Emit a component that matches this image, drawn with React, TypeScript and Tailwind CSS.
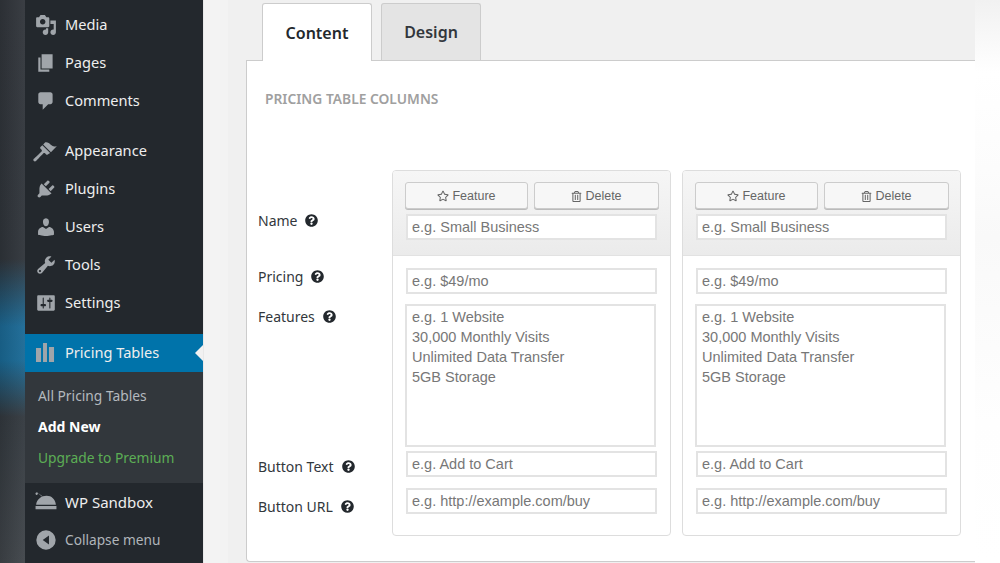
import React from "react";
import { FaQuestionCircle, FaRegStar, FaRegTrashAlt } from "react-icons/fa";

const P = ({ d }: { d: string }) => (
  <svg viewBox="0 0 20 20" className="w-[22px] h-[22px] fill-[#a0a5aa] overflow-visible" fillRule="evenodd">
    <path d={d} />
  </svg>
);

const icons: Record<string, React.ReactNode> = {
  media: <P d="M13 11V4c0-.55-.45-1-1-1h-1.67L9 1H5L3.67 3H2c-.55 0-1 .45-1 1v7c0 .55.45 1 1 1h10c.55 0 1-.45 1-1zM7 4.500c1.380 0 2.500 1.120 2.500 2.500S8.380 9.500 7 9.500 4.500 8.380 4.500 7 5.620 4.500 7 4.500zM14 6h5v10.500c0 1.380-1.120 2.500-2.500 2.500S14 17.880 14 16.500s1.120-2.500 2.500-2.500c.17 0 .34.02.5.05V9h-3V6zm-4 8.050V13h2v3.500c0 1.380-1.120 2.500-2.500 2.500S7 17.880 7 16.500 8.120 14 9.500 14c.17 0 .34.02.5.05z" />,
  pages: <P d="M6 15V2h10v13H6zm-1 1h8v2H3V5h2v11z" />,
  comments: <P d="M5 2h9c1.100 0 2 .9 2 2v7c0 1.100-.9 2-2 2h-2l-5 5v-5H5c-1.100 0-2-.9-2-2V4c0-1.100.9-2 2-2z" />,
  appearance: <P d="M14.480 11.060L7.410 3.990l1.500-1.500c.5-.56 2.300-.47 3.510.32 1.210.8 1.430 1.280 2.910 2.100 1.180.64 2.450 1.260 4.450.85zm-.71.71L6.700 4.700 4.930 6.470c-.39.39-.39 1.020 0 1.410l1.060 1.060c.39.39.39 1.030 0 1.420-.6.6-6.400 6.110-7.070 6.770-.55.55-.55 1.450 0 2 .56.56 1.450.55 2 0 .67-.67 6.170-6.470 6.770-7.070.39-.39 1.020-.39 1.410 0l1.060 1.060c.39.39 1.020.39 1.410 0z" />,
  plugins: <P d="M13.110 4.360L9.870 7.600 8 5.730l3.240-3.240c.35-.34 1.050-.2 1.560.32.52.51.66 1.210.31 1.550zm-8 1.770l.91-1.120 9.010 9.010-1.190.84c-.71.71-2.630 1.160-3.820 1.160H6.140L4.900 17.260c-.59.59-1.540.59-2.120 0-.59-.58-.59-1.530 0-2.120l1.240-1.240v-3.880c0-1.130.4-3.190 1.090-3.890zm7.260 3.970l3.240-3.240c.34-.35 1.040-.21 1.550.31.52.51.66 1.210.31 1.550l-3.240 3.250z" />,
  users: <P d="M10 9.250c-2.270 0-2.730-3.440-2.730-3.440C7 4.020 7.820 2 9.970 2c2.160 0 2.980 2.020 2.710 3.810 0 0-.41 3.440-2.680 3.440zm0 2.570L12.720 10c2.390 0 4.520 2.330 4.520 4.530v2.490s-3.650 1.130-7.240 1.130c-3.650 0-7.240-1.130-7.240-1.130v-2.490c0-2.250 1.940-4.480 4.470-4.480z" />,
  tools: <P d="M16.680 9.770c-1.340 1.340-3.300 1.670-4.950.99l-5.410 6.520c-.99.99-2.590.99-3.580 0s-.99-2.590 0-3.570l6.520-5.420c-.68-1.650-.35-3.610.99-4.950 1.280-1.280 3.120-1.620 4.720-1.060l-2.890 2.890 2.820 2.820 2.860-2.870c.53 1.580.18 3.390-1.080 4.670zM3.810 16.210c.4.39 1.040.39 1.430 0 .4-.4.4-1.040 0-1.430-.39-.4-1.030-.4-1.430 0-.39.39-.39 1.030 0 1.430z" />,
  settings: <P d="M18 16V4c0-.55-.45-1-1-1H3c-.55 0-1 .45-1 1v12c0 .55.45 1 1 1h14c.55 0 1-.45 1-1zM8 11h1c.55 0 1 .45 1 1s-.45 1-1 1H8v1.500c0 .28-.22.5-.5.5s-.5-.22-.5-.5V13H6c-.55 0-1-.45-1-1s.45-1 1-1h1V5.500c0-.28.22-.5.5-.5s.5.22.5.5V11zm5-2h-1c-.55 0-1-.45-1-1s.45-1 1-1h1V5.500c0-.28.22-.5.5-.5s.5.22.5.5V7h1c.55 0 1 .45 1 1s-.45 1-1 1h-1v5.500c0 .28-.22.5-.5.5s-.5-.22-.5-.5V9z" />,
  pricing: <P d="M.9 18.200V5.500h4.600v12.700zM7.300 18.200V1h3.600v17.200zM12.700 18.200V4.500h4.600v13.700z" />,
  sandbox: <P d="M.5 13.600h19v2.900H.5zM1 12.600C1.500 7.500 6 4.400 10.500 4.400s8 3.100 8.500 8.200zM5.900 4.800L2.400 1.700a1.100 1.100 0 1 1-1.100-.4l.5-.1 5 3.600z" />,
  collapse: <P d="M10 1.200a8.800 8.800 0 1 1 0 17.600 8.800 8.800 0 0 1 0-17.600zm2.700 4.800L7 10l5.700 4z" />,
};

const Item = ({ icon, name, text, size }: { icon: string; name: string; text: string; size: string }) => (
  <div className={`flex items-center h-[38px] pl-[10px] ${size} ${text}`}>
    <span className="w-[30px] flex shrink-0">{icons[icon]}</span>
    <span>{name}</span>
  </div>
);

const Row = ({ icon, name }: { icon: string; name: string }) => (
  <Item icon={icon} name={name} text="text-[#eeeeee]" size="text-[14.6px]" />
);

const Help = () => <FaQuestionCircle className="inline-block text-[13px] text-[#23282d] ml-[8px] align-[-1px]" />;

const Label = ({ text, className }: { text: string; className: string }) => (
  <div className={`h-[20px] leading-[20px] text-[14px] text-[#32373c] whitespace-nowrap ${className}`}>
    {text}
    <Help />
  </div>
);

const field =
  "block h-[26px] w-[251px] ml-px border-2 border-[#e3e3e3] bg-white pl-[4px] text-[14.5px] text-[#555] placeholder:text-[#777] font-['Liberation_Sans',sans-serif] outline-none";

const Btn = ({ icon, text, w }: { icon: React.ReactNode; text: string; w: string }) => (
  <button className={`${w} h-[27px] pt-px flex items-center justify-center gap-[3px] rounded-[3px] border border-[#cccccc] bg-[#f7f7f7] shadow-[0_1px_0_#bbbbbb] text-[12.5px] text-[#666] font-['Liberation_Sans',sans-serif]`}>
    {icon}
    {text}
  </button>
);

const Column = () => (
  <div className="w-[279px] h-[366px] rounded-[4px] border border-[#dddddd] bg-white overflow-hidden shrink-0">
    <div className="h-[85px] border-b border-[#e2e2e2] bg-[linear-gradient(#f6f6f6,#ebebeb)] pl-[12px] pt-[11px]">
      <div className="flex gap-[6px]">
        <Btn w="w-[123px]" text="Feature" icon={<FaRegStar className="text-[12px]" />} />
        <Btn w="w-[125px]" text="Delete" icon={<FaRegTrashAlt className="text-[11px]" />} />
      </div>
      <input className={`${field} mt-[5px]`} placeholder="e.g. Small Business" />
    </div>
    <div className="pl-[12px] pt-[12px]">
      <input className={field} placeholder="e.g. $49/mo" />
      <textarea
        className="block mt-[10px] h-[143px] w-[251px] resize-none border-2 border-[#e3e3e3] bg-white pl-[5px] pt-[1px] leading-[20px] text-[14.5px] placeholder:text-[#777] font-['Liberation_Sans',sans-serif] outline-none"
        placeholder={"e.g. 1 Website\n30,000 Monthly Visits\nUnlimited Data Transfer\n5GB Storage"}
      />
      <input className={`${field} mt-[4px]`} placeholder="e.g. Add to Cart" />
      <input className={`${field} mt-[11px]`} placeholder="e.g. http://example.com/buy" />
    </div>
  </div>
);

export default function App() {
  return (
    <div className="w-[1000px] h-[563px] flex overflow-hidden bg-white font-['Noto_Sans',sans-serif]">
      <div className="w-[25px] h-full shrink-0 bg-[linear-gradient(90deg,rgba(0,0,0,0.12),rgba(255,255,255,0.04)),linear-gradient(#32363c_0%,#30353b_46%,#1c6a96_58%,#1a6a96_64%,#33393f_74%,#40454a_100%)]" />
      <nav className="w-[178px] h-full shrink-0 bg-[#23282d] pt-[6px]">
        <Row icon="media" name="Media" />
        <Row icon="pages" name="Pages" />
        <Row icon="comments" name="Comments" />
        <div className="h-[12px]" />
        <Row icon="appearance" name="Appearance" />
        <Row icon="plugins" name="Plugins" />
        <Row icon="users" name="Users" />
        <Row icon="tools" name="Tools" />
        <Row icon="settings" name="Settings" />
        <div className="h-[12px]" />
        <div className="relative bg-[#0073aa]">
          <Row icon="pricing" name="Pricing Tables" />
          <div className="absolute right-0 top-[11px] w-0 h-0 border-y-[8px] border-y-transparent border-r-[8px] border-r-[#f1f1f1]" />
        </div>
        <div className="bg-[#32373c] pt-[8px] pb-[10px] pl-[13px] text-[13.8px] leading-[31px]">
          <div className="text-[#b4b9be]">All Pricing Tables</div>
          <div className="text-white font-bold text-[14px]">Add New</div>
          <div className="text-[#5cae55]">Upgrade to Premium</div>
        </div>
        <Item icon="sandbox" name="WP Sandbox" text="text-[#eeeeee]" size="text-[15px]" />
        <Item icon="collapse" name="Collapse menu" text="text-[#b0b5ba]" size="text-[13.7px]" />
      </nav>
      <div className="w-px h-full shrink-0 bg-[#e8e8e8]" />
      <div className="w-[24px] h-full shrink-0 bg-[#f3f3f3]" />
      <main className="w-[747px] h-full shrink-0 bg-[#f0f0f0] pl-[18px] pt-[3px]">
        <div className="flex pl-[16px] gap-[9px] items-end">
          <div className="relative z-10 -mb-px h-[58px] w-[110px] flex items-center justify-center rounded-t-[3px] border border-b-0 border-[#cccccc] bg-white text-[16px] font-semibold text-[#23282d]">
            Content
          </div>
          <div className="h-[57px] w-[100px] flex items-center justify-center rounded-t-[3px] border border-b-0 border-[#cccccc] bg-[#e4e4e4] text-[16px] font-semibold text-[#32373c]">
            Design
          </div>
        </div>
        <section className="h-[502px] rounded-bl-[4px] border border-r-0 border-[#cccccc] bg-white pl-[11px]">
          <h2 className="pt-[28px] pl-[7px] h-[48px] leading-[20px] text-[13.8px] font-semibold text-[#a0a0a0]">PRICING TABLE COLUMNS</h2>
          <div className="flex mt-[61px]">
            <div className="w-[134px] shrink-0 pt-[41px]">
              <Label text="Name" className="" />
              <Label text="Pricing" className="mt-[36px]" />
              <Label text="Features" className="mt-[20px]" />
              <Label text="Button Text" className="mt-[130px]" />
              <Label text="Button URL" className="mt-[20px]" />
            </div>
            <div className="flex gap-[11px]">
              <Column />
              <Column />
            </div>
          </div>
        </section>
      </main>
      <div className="flex-1 h-full bg-[linear-gradient(#f1f1f1_0%,#ffffff_13%,#fcfcfc_30%,#f9f9f9_42%,#fefefe_75%,#ffffff_100%)]" />
    </div>
  );
}
